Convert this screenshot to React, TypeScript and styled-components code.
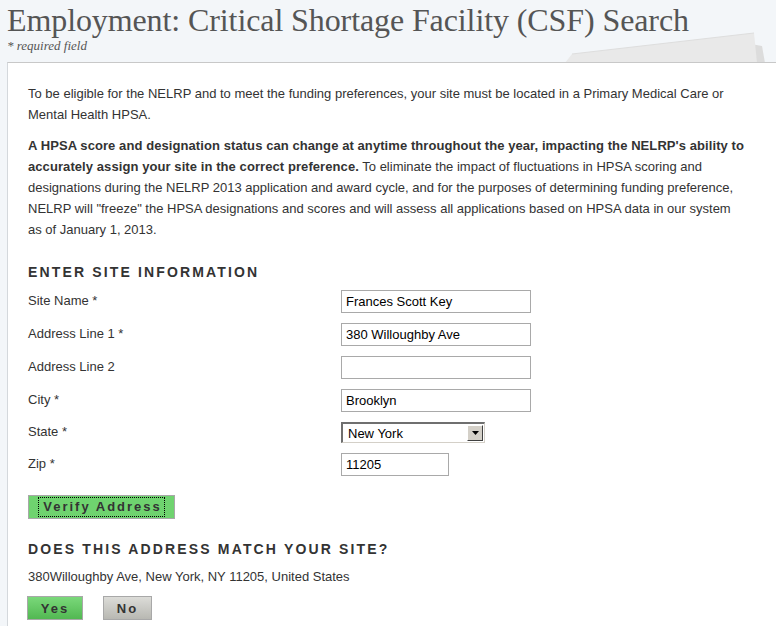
import styled, { createGlobalStyle } from "styled-components";

const GlobalStyle = createGlobalStyle`
  html, body {
    margin: 0;
    padding: 0;
    background: #f3f6f9;
    overflow: hidden;
  }
  body {
    font-family: "Liberation Sans", Arial, sans-serif;
    color: #333;
  }
`;

const Page = styled.div`
  position: relative;
  width: 776px;
  height: 626px;
  overflow: hidden;
`;

const Header = styled.div`
  padding: 2px 0 0 7px;
  height: 62px;
  box-sizing: border-box;
`;

const Title = styled.h1`
  margin: 0;
  font-family: "Liberation Serif", "Times New Roman", serif;
  font-weight: normal;
  font-size: 32px;
  line-height: 36px;
  color: #555;
  letter-spacing: -0.1px;
`;

const Required = styled.div`
  font-family: "Liberation Serif", "Times New Roman", serif;
  font-style: italic;
  font-size: 13px;
  line-height: 15px;
  color: #555;
`;

const Paper = styled.svg`
  position: absolute;
  top: 0;
  left: 0;
  z-index: 0;
`;

const Panel = styled.div`
  position: relative;
  z-index: 1;
  margin-left: 7px;
  width: 800px;
  min-height: 600px;
  background: #fff;
  border-top: 1px solid #c8c8c8;
  border-left: 1px solid #d4d8dc;
  padding: 20px 20px 0 20px;
  box-sizing: border-box;
`;

const Content = styled.div`
  width: 717px;
`;

const Para = styled.p`
  margin: 0 0 10px;
  font-size: 13px;
  line-height: 21px;
  color: #333;

  b {
    letter-spacing: 0.08px;
  }
`;

const SectionTitle = styled.h2<{ $top: number }>`
  margin: ${(p) => p.$top}px 0 0;
  font-size: 14px;
  line-height: 16px;
  font-weight: bold;
  letter-spacing: 2.15px;
  color: #333;
`;

const Form = styled.div`
  display: grid;
  grid-template-columns: 313px 1fr;
  row-gap: 10px;
  margin-top: 10px;
  align-items: center;
`;

const Label = styled.div`
  font-size: 13px;
  color: #333;
  padding-bottom: 2px;
`;

const TextInput = styled.input<{ $w: number }>`
  box-sizing: border-box;
  width: ${(p) => p.$w}px;
  height: 23px;
  border: 1px solid #a9a9a9;
  padding: 0 4px;
  font-family: "Liberation Sans", Arial, sans-serif;
  font-size: 13px;
  color: #000;
  background: #fff;
  outline: none;
`;

const SelectBox = styled.div`
  box-sizing: border-box;
  width: 144px;
  height: 21px;
  display: flex;
  align-items: center;
  justify-content: space-between;
  border-top: 2px solid #6f6f6f;
  border-left: 2px solid #6f6f6f;
  border-right: 1px solid #d4d0c8;
  border-bottom: 1px solid #d4d0c8;
  background: #fff;
  padding-left: 5px;
  font-size: 13px;
  color: #000;
`;

const SelectArrow = styled.div`
  width: 16px;
  height: 16px;
  margin-right: 1px;
  box-sizing: border-box;
  background: #d4d0c8;
  border-top: 1px solid #fff;
  border-left: 1px solid #fff;
  border-right: 1px solid #404040;
  border-bottom: 1px solid #404040;
  display: flex;
  align-items: center;
  justify-content: center;
`;

const Button = styled.button<{ $variant: "flat" | "yes" | "no"; $w: number }>`
  box-sizing: border-box;
  width: ${(p) => p.$w}px;
  height: 24px;
  border: 1px solid #a8a8a8;
  font-family: "Liberation Sans", Arial, sans-serif;
  font-weight: bold;
  font-size: 13px;
  letter-spacing: 2px;
  color: #333;
  padding: 0;
  display: flex;
  align-items: center;
  justify-content: center;
  background: ${(p) =>
    p.$variant === "flat"
      ? "#6fd36f"
      : p.$variant === "yes"
      ? "linear-gradient(#7ad87a, #52b852)"
      : "linear-gradient(#dcdcd8, #b8b8b2)"};
`;

const FocusRing = styled.span`
  border: 1px dotted #000;
  padding: 1px 2px 1px 4px;
  line-height: 16px;
`;

const VerifyRow = styled.div`
  margin-top: 19px;
`;

const Address = styled.div`
  margin-top: 12px;
  font-size: 13px;
  color: #333;
`;

const ButtonRow = styled.div`
  display: flex;
  gap: 20px;
  margin-top: 12px;
  margin-left: -1px;
`;

const fields = [
  { label: "Site Name *", value: "Frances Scott Key" },
  { label: "Address Line 1 *", value: "380 Willoughby Ave" },
  { label: "Address Line 2", value: "" },
  { label: "City *", value: "Brooklyn" },
];

export default function App() {
  return (
    <Page>
      <GlobalStyle />
      <Paper width="776" height="64" viewBox="0 0 776 64">
        <polygon points="751,44 762,46 765,63 751,63" fill="#dcdcdc" />
        <polygon points="565,63 572,54 754,33 757,63" fill="#e9e9e9" />
        <polyline points="572,54 754,33" stroke="#dedede" strokeWidth="1" fill="none" />
      </Paper>
      <Header>
        <Title>Employment: Critical Shortage Facility (CSF) Search</Title>
        <Required>* required field</Required>
      </Header>
      <Panel>
        <Content>
          <Para>
            To be eligible for the NELRP and to meet the funding preferences, your site must be
            located in a Primary Medical Care or Mental Health HPSA.
          </Para>
          <Para>
            <b>
              A HPSA score and designation status can change at anytime throughout the year,
              impacting the NELRP's ability to accurately assign your site in the correct
              preference.
            </b>{" "}
            To eliminate the impact of fluctuations in HPSA scoring and designations during the
            NELRP 2013 application and award cycle, and for the purposes of determining funding
            preference, NELRP will "freeze" the HPSA designations and scores and will assess all
            applications based on HPSA data in our system as of January 1, 2013.
          </Para>

          <SectionTitle $top={24}>ENTER SITE INFORMATION</SectionTitle>
          <Form>
            {fields.map((f) => (
              <div key={f.label} style={{ display: "contents" }}>
                <Label>{f.label}</Label>
                <TextInput $w={190} defaultValue={f.value} />
              </div>
            ))}
            <Label>State *</Label>
            <SelectBox>
              <span>New York</span>
              <SelectArrow>
                <svg width="7" height="4" viewBox="0 0 7 4">
                  <polygon points="0,0 7,0 3.5,4" fill="#000" />
                </svg>
              </SelectArrow>
            </SelectBox>
            <Label>Zip *</Label>
            <TextInput $w={108} defaultValue="11205" />
          </Form>

          <VerifyRow>
            <Button $variant="flat" $w={147}>
              <FocusRing>Verify Address</FocusRing>
            </Button>
          </VerifyRow>

          <SectionTitle $top={22}>DOES THIS ADDRESS MATCH YOUR SITE?</SectionTitle>
          <Address>380Willoughby Ave, New York, NY 11205, United States</Address>
          <ButtonRow>
            <Button $variant="yes" $w={56}>Yes</Button>
            <Button $variant="no" $w={49}>No</Button>
          </ButtonRow>
        </Content>
      </Panel>
    </Page>
  );
}
